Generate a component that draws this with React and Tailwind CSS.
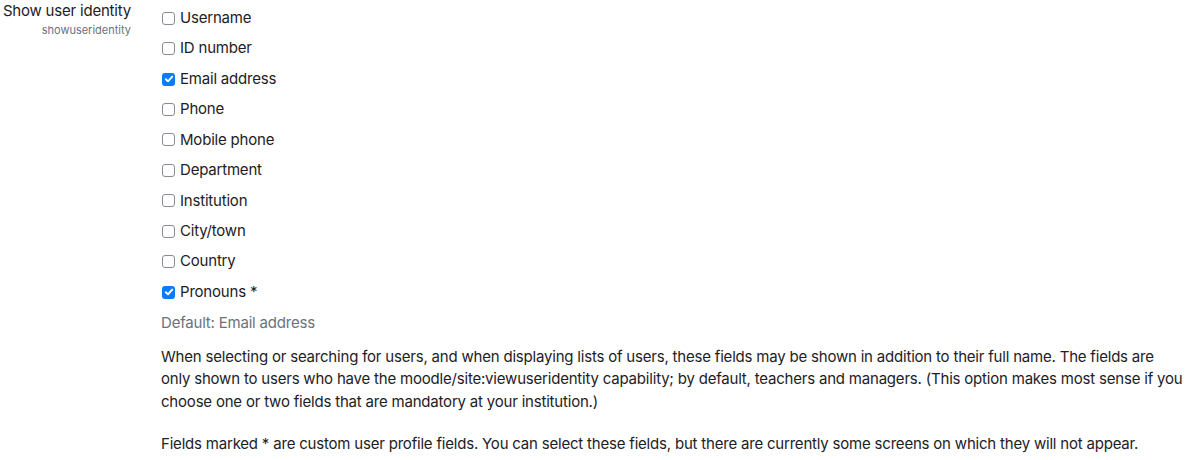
const fields = [
  { label: "Username", checked: false },
  { label: "ID number", checked: false },
  { label: "Email address", checked: true },
  { label: "Phone", checked: false },
  { label: "Mobile phone", checked: false },
  { label: "Department", checked: false },
  { label: "Institution", checked: false },
  { label: "City/town", checked: false },
  { label: "Country", checked: false },
  { label: "Pronouns *", checked: true },
];

function Checkbox({ checked }) {
  if (checked) {
    return (
      <span className="w-[13px] h-[13px] rounded-[3px] bg-[#0b7bf7] flex items-center justify-center shrink-0">
        <svg width="10" height="10" viewBox="0 0 10 10" fill="none">
          <path d="M1.8 5.2 L4 7.3 L8.2 2.6" stroke="white" strokeWidth="1.9" strokeLinecap="round" strokeLinejoin="round" />
        </svg>
      </span>
    );
  }
  return (
    <span className="w-[13px] h-[13px] rounded-[3px] border border-[#8b8b95] bg-white shrink-0" />
  );
}

export default function App() {
  return (
    <div
      className="flex text-[15px] leading-[22.5px] text-[#1d2125] bg-white tracking-[-0.2px]"
      style={{ fontFamily: "Inter, 'Noto Sans', sans-serif" }}
    >
      <div className="w-[146px] shrink-0 pr-[15px] text-right whitespace-nowrap">
        <div>Show user identity</div>
        <div className="text-[11px] leading-[16px] text-[#6a737b] -mt-[1px] tracking-normal">showuseridentity</div>
      </div>
      <div className="flex-1 min-w-0 pl-[15px]">
        <div className="pt-[3px] flex flex-col">
          {fields.map((f) => (
            <label key={f.label} className="flex items-center gap-[5px] h-[30.45px] pl-[1px]">
              <Checkbox checked={f.checked} />
              <span>{f.label}</span>
            </label>
          ))}
        </div>
        <div className="text-[#6a737b] mt-[5px]">Default: Email address</div>
        <p className="mt-[11px] whitespace-nowrap">
          When selecting or searching for users, and when displaying lists of users, these fields may be shown in addition to their full name. The fields are
          <br />
          only shown to users who have the moodle/site:viewuseridentity capability; by default, teachers and managers. (This option makes most sense if you
          <br />
          choose one or two fields that are mandatory at your institution.)
        </p>
        <p className="mt-[20px] whitespace-nowrap">
          Fields marked * are custom user profile fields. You can select these fields, but there are currently some screens on which they will not appear.
        </p>
      </div>
    </div>
  );
}
